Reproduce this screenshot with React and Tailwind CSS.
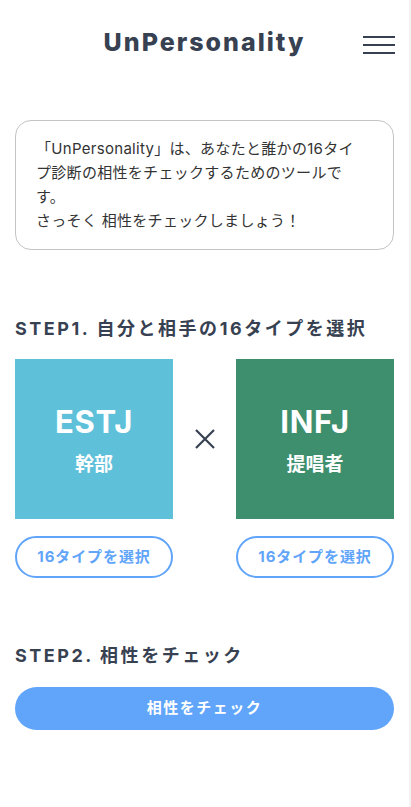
import React, { useState } from 'react'

const types = [
  { code: 'ESTJ', name: '幹部', color: 'bg-[#5fc0da]' },
  { code: 'INFJ', name: '提唱者', color: 'bg-[#3e8f6d]' },
]

const TypeCard = ({ t }) => (
  <div className="flex flex-col gap-[17px] w-[158px]">
    <div className={`h-[160px] ${t.color} flex flex-col items-center justify-center text-white`}>
      <span className="text-[31px] font-bold leading-none tracking-wide mt-[2px]">{t.code}</span>
      <span className="text-[19px] font-bold leading-none mt-[18px]">{t.name}</span>
    </div>
    <button className="h-[42px] rounded-full border-2 border-[#60a5fa] text-[#60a5fa] text-[15px] font-bold tracking-[0.06em]">
      16タイプを選択
    </button>
  </div>
)

const App = () => {
  const [open, setOpen] = useState(false)

  return (
    <div
      className="min-h-screen bg-white border-r-2 border-[#f3f3f3] text-[#374151]"
      style={{ fontFamily: 'Inter, "Noto Sans CJK JP", sans-serif' }}
    >
      {/* Header */}
      <header className="relative h-[86px] flex items-center justify-center">
        <h1 className="text-[25px] font-extrabold tracking-[0.08em] text-[#374151]">UnPersonality</h1>
        <button
          onClick={() => setOpen(!open)}
          className="absolute right-[14px] top-[36px] w-[32px] flex flex-col gap-[6px]"
        >
          <span className="block h-[2px] bg-[#374151]" />
          <span className="block h-[2px] bg-[#374151]" />
          <span className="block h-[2px] bg-[#374151]" />
        </button>
      </header>

      <main className="px-[15px] pt-[34px]">
        {/* Intro */}
        <div className="rounded-[16px] border border-[#c4c4c4] pl-[20px] pr-[26px] py-[16px] text-[15px] leading-[24px] tracking-[0.02em] text-[#333]">
          <p>「UnPersonality」は、あなたと誰かの16タイプ診断の相性をチェックするためのツールです。</p>
          <p>さっそく 相性をチェックしましょう！</p>
        </div>

        {/* Step 1 */}
        <h2 className="mt-[65px] text-[18px] font-bold tracking-[0.14em] leading-[28px]">
          STEP1. 自分と相手の16タイプを選択
        </h2>
        <div className="mt-[16px] flex justify-between">
          <TypeCard t={types[0]} />
          <div className="h-[160px] flex items-center justify-center">
            <svg width="22" height="22" viewBox="0 0 22 22" className="stroke-[#374151]">
              <path d="M2 2L20 20M20 2L2 20" strokeWidth="2.2" />
            </svg>
          </div>
          <TypeCard t={types[1]} />
        </div>

        {/* Step 2 */}
        <h2 className="mt-[64px] text-[18px] font-bold tracking-[0.14em] leading-[28px]">
          STEP2. 相性をチェック
        </h2>
        <button className="mt-[17px] w-full h-[43px] rounded-full bg-[#60a5fa] text-white text-[15px] font-bold tracking-widest">
          相性をチェック
        </button>
      </main>
    </div>
  )
}

export default App
